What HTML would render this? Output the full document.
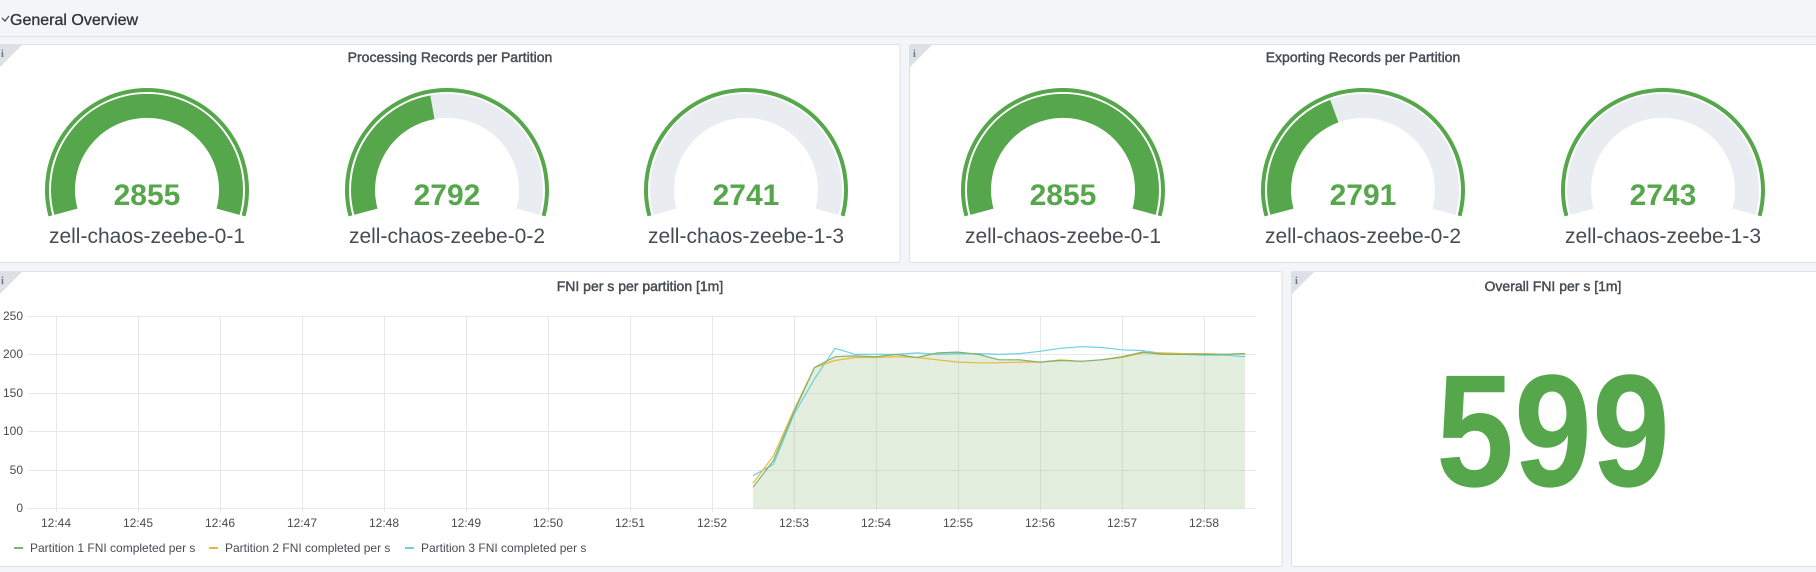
<!DOCTYPE html>
<html><head><meta charset="utf-8"><style>
html,body{margin:0;padding:0;background:#f4f5f8;width:1816px;height:572px;overflow:hidden;font-family:"Liberation Sans",sans-serif}
</style></head><body>
<svg width="1816" height="572" viewBox="0 0 1816 572" xmlns="http://www.w3.org/2000/svg" font-family="Liberation Sans, sans-serif">
<rect width="1816" height="572" fill="#f4f5f8"/>
<path d="M2 18 l3 3 l4 -5" fill="none" stroke="#464c54" stroke-width="1.3"/>
<text x="10" y="25" font-size="16" fill="#2e3238" stroke="#2e3238" stroke-width="0.3">General Overview</text>
<line x1="0" y1="36.5" x2="1816" y2="36.5" stroke="#dfe2e7"/>
<rect x="-1" y="44.5" width="901" height="218" rx="2" fill="#fff" stroke="#dde0e5"/>
<rect x="909.5" y="44.5" width="910" height="218" rx="2" fill="#fff" stroke="#dde0e5"/>
<rect x="-1" y="271.5" width="1283" height="295" rx="2" fill="#fff" stroke="#dde0e5"/>
<rect x="1291.5" y="271.5" width="530" height="295" rx="2" fill="#fff" stroke="#dde0e5"/>
<path d="M0 45 h22 l-22 22z" fill="#dde0e5"/><text x="1" y="57" font-size="10" fill="#6c7380" font-family="Liberation Serif, serif" font-weight="bold">i</text>
<path d="M910 45 h22 l-22 22z" fill="#dde0e5"/><text x="913" y="57" font-size="10" fill="#6c7380" font-family="Liberation Serif, serif" font-weight="bold">i</text>
<path d="M0 272 h22 l-22 22z" fill="#dde0e5"/><text x="1" y="284" font-size="10" fill="#6c7380" font-family="Liberation Serif, serif" font-weight="bold">i</text>
<path d="M1292 272 h22 l-22 22z" fill="#dde0e5"/><text x="1295" y="284" font-size="10" fill="#6c7380" font-family="Liberation Serif, serif" font-weight="bold">i</text>
<g font-size="14" fill="#464c54" stroke="#464c54" stroke-width="0.45" text-anchor="middle">
<text x="450" y="62">Processing Records per Partition</text>
<text x="1363" y="62">Exporting Records per Partition</text>
<text x="640" y="291">FNI per s per partition [1m]</text>
<text x="1553" y="291">Overall FNI per s [1m]</text>
</g>
<defs>
<g id="ring"><path d="M-96.6 215.9 A100 100 0 1 1 96.6 215.9" fill="none" stroke="#56a64b" stroke-width="4"/></g>
<g id="bg"><path d="M-81.1 211.7 A84 84 0 1 1 81.1 211.7" fill="none" stroke="#e9ecf0" stroke-width="24"/></g>
</defs>
<g font-size="30" font-weight="bold" fill="#56a64b" text-anchor="middle">
<g transform="translate(147 0)"><use href="#ring"/><path d="M-81.1 211.7 A84 84 0 1 1 81.1 211.7" fill="none" stroke="#56a64b" stroke-width="24"/><text x="0" y="205">2855</text></g>
<g transform="translate(447 0)"><use href="#ring"/><use href="#bg"/><path d="M-81.1 211.7 A84 84 0 0 1 -14.6 107.3" fill="none" stroke="#56a64b" stroke-width="24"/><text x="0" y="205">2792</text></g>
<g transform="translate(746 0)"><use href="#ring"/><use href="#bg"/><text x="0" y="205">2741</text></g>
<g transform="translate(1063 0)"><use href="#ring"/><path d="M-81.1 211.7 A84 84 0 1 1 81.1 211.7" fill="none" stroke="#56a64b" stroke-width="24"/><text x="0" y="205">2855</text></g>
<g transform="translate(1363 0)"><use href="#ring"/><use href="#bg"/><path d="M-81.1 211.7 A84 84 0 0 1 -28.7 111.1" fill="none" stroke="#56a64b" stroke-width="24"/><text x="0" y="205">2791</text></g>
<g transform="translate(1663 0)"><use href="#ring"/><use href="#bg"/><text x="0" y="205">2743</text></g>
</g>
<g font-size="21" fill="#464c54" text-anchor="middle">
<text x="147" y="243">zell-chaos-zeebe-0-1</text>
<text x="447" y="243">zell-chaos-zeebe-0-2</text>
<text x="746" y="243">zell-chaos-zeebe-1-3</text>
<text x="1063" y="243">zell-chaos-zeebe-0-1</text>
<text x="1363" y="243">zell-chaos-zeebe-0-2</text>
<text x="1663" y="243">zell-chaos-zeebe-1-3</text>
</g>
<g stroke="#e6e8eb" stroke-width="1">
<line x1="28" y1="316.5" x2="1256" y2="316.5"/><line x1="28" y1="354.5" x2="1256" y2="354.5"/><line x1="28" y1="393.5" x2="1256" y2="393.5"/><line x1="28" y1="431.5" x2="1256" y2="431.5"/><line x1="28" y1="470.5" x2="1256" y2="470.5"/><line x1="28" y1="508.5" x2="1256" y2="508.5"/>
<line x1="56.5" y1="316" x2="56.5" y2="512"/><line x1="138.5" y1="316" x2="138.5" y2="512"/><line x1="220.5" y1="316" x2="220.5" y2="512"/><line x1="302.5" y1="316" x2="302.5" y2="512"/><line x1="384.5" y1="316" x2="384.5" y2="512"/><line x1="466.5" y1="316" x2="466.5" y2="512"/><line x1="548.5" y1="316" x2="548.5" y2="512"/><line x1="630.5" y1="316" x2="630.5" y2="512"/><line x1="712.5" y1="316" x2="712.5" y2="512"/><line x1="794.5" y1="316" x2="794.5" y2="512"/><line x1="876.5" y1="316" x2="876.5" y2="512"/><line x1="958.5" y1="316" x2="958.5" y2="512"/><line x1="1040.5" y1="316" x2="1040.5" y2="512"/><line x1="1122.5" y1="316" x2="1122.5" y2="512"/><line x1="1204.5" y1="316" x2="1204.5" y2="512"/>
</g>
<g font-size="12" fill="#464c54" text-anchor="end">
<text x="23" y="320">250</text><text x="23" y="358">200</text><text x="23" y="397">150</text><text x="23" y="435">100</text><text x="23" y="474">50</text><text x="23" y="512">0</text>
</g>
<g font-size="12" fill="#464c54" text-anchor="middle">
<text x="56" y="527">12:44</text><text x="138" y="527">12:45</text><text x="220" y="527">12:46</text><text x="302" y="527">12:47</text><text x="384" y="527">12:48</text><text x="466" y="527">12:49</text><text x="548" y="527">12:50</text><text x="630" y="527">12:51</text><text x="712" y="527">12:52</text><text x="794" y="527">12:53</text><text x="876" y="527">12:54</text><text x="958" y="527">12:55</text><text x="1040" y="527">12:56</text><text x="1122" y="527">12:57</text><text x="1204" y="527">12:58</text>
</g>
<path d="M753 508.5 L753 487.3 L773.5 460.4 L794 412 L814.5 367.5 L835 356.7 L855.5 355.9 L876 356.7 L896.5 354.4 L917 357.5 L937.5 352.9 L958 352.1 L978.5 354.4 L999 359.8 L1019.5 359.8 L1040 362.1 L1060.5 360.5 L1081 361.3 L1101.5 359.8 L1122 356.7 L1142.5 352.1 L1163 354.4 L1183.5 354.4 L1204 354.4 L1224.5 354.4 L1245 353.6 L1245 508.5Z" fill="#7eb26d" fill-opacity="0.22"/>
<g fill="none" stroke-width="1.2">
<polyline stroke="#6ed0e0" points="753,475.7 773.5,464.2 794,414.3 814.5,379 835,348.3 855.5,354.4 876,354.4 896.5,354.4 917,352.9 937.5,354.4 958,353.6 978.5,353.6 999,354.4 1019.5,353.6 1040,351.3 1060.5,348.3 1081,346.7 1101.5,347.5 1122,349.8 1142.5,350.6 1163,353.6 1183.5,354.4 1204,355.2 1224.5,355.2 1245,356.7"/>
<polyline stroke="#eab839" points="753,483.4 773.5,455.8 794,409.7 814.5,367.5 835,360.5 855.5,357.5 876,357.5 896.5,356.7 917,357.5 937.5,359.8 958,362.1 978.5,362.8 999,362.8 1019.5,362.1 1040,362.1 1060.5,359.8 1081,361.3 1101.5,359.8 1122,357.5 1142.5,352.9 1163,352.9 1183.5,353.6 1204,353.6 1224.5,354.4 1245,353.6"/>
<polyline stroke="#7eb26d" points="753,487.3 773.5,460.4 794,412 814.5,367.5 835,356.7 855.5,355.9 876,356.7 896.5,354.4 917,357.5 937.5,352.9 958,352.1 978.5,354.4 999,359.8 1019.5,359.8 1040,362.1 1060.5,360.5 1081,361.3 1101.5,359.8 1122,356.7 1142.5,352.1 1163,354.4 1183.5,354.4 1204,354.4 1224.5,354.4 1245,353.6"/>
</g>
<g font-size="12" fill="#464c54">
<rect x="14" y="547" width="9" height="2" fill="#7eb26d"/><text x="30" y="552">Partition 1 FNI completed per s</text>
<rect x="209" y="547" width="9" height="2" fill="#eab839"/><text x="225" y="552">Partition 2 FNI completed per s</text>
<rect x="405" y="547" width="9" height="2" fill="#6ed0e0"/><text x="421" y="552">Partition 3 FNI completed per s</text>
</g>
<text x="1553" y="486" font-size="160" font-weight="bold" fill="#56a64b" text-anchor="middle" textLength="234" lengthAdjust="spacingAndGlyphs">599</text>
</svg>
</body></html>
